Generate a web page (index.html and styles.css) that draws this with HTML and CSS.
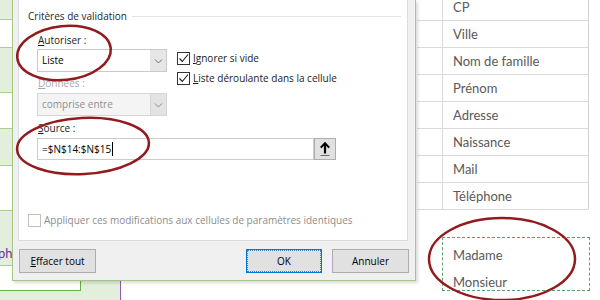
FILE: index.html
```html
<!DOCTYPE html>
<html lang="fr">
<head>
  <meta charset="UTF-8" />
  <title>Validation des données</title>
  <link rel="stylesheet" href="styles.css">
</head>
<body>
  <div class="screen">
    <div class="sheet-left">
      <div class="band green h19"></div>
      <div class="band h28"></div>
      <div class="band green h45"></div>
      <div class="band h36"></div>
      <div class="band green h37"></div>
      <div class="band h45"></div>
      <div class="band green h55"><span class="cut">phe</span></div>
      <div class="band rest"></div>
    </div>

    <div class="dialog">
      <div class="panel">
        <div class="group-title"><span>Critères de validation</span></div>

        <div class="criteria">
          <div class="col-left">
            <label class="lbl"><u>A</u>utoriser :</label>
            <div class="combo">
              <span class="combo-text">Liste</span>
              <span class="combo-btn">
                <svg width="9" height="6" viewBox="0 0 9 6"><path d="M1 1.5l3.5 3.5L8 1.5" fill="none" stroke="#6b6b6b"/></svg>
              </span>
            </div>
            <label class="lbl off"><u>D</u>onnées :</label>
            <div class="combo off">
              <span class="combo-text">comprise entre</span>
              <span class="combo-btn">
                <svg width="9" height="6" viewBox="0 0 9 6"><path d="M1 1.5l3.5 3.5L8 1.5" fill="none" stroke="#8a8a8a"/></svg>
              </span>
            </div>
          </div>
          <div class="col-right">
            <div class="check">
              <span class="box"><svg width="11" height="11" viewBox="0 0 11 11"><path d="M1.5 5.5l2.8 3L10 1.5" fill="none" stroke="#1a1a1a" stroke-width="1.1"/></svg></span>
              <span><u>I</u>gnorer si vide</span>
            </div>
            <div class="check">
              <span class="box"><svg width="11" height="11" viewBox="0 0 11 11"><path d="M1.5 5.5l2.8 3L10 1.5" fill="none" stroke="#1a1a1a" stroke-width="1.1"/></svg></span>
              <span><u>L</u>iste déroulante dans la cellule</span>
            </div>
          </div>
        </div>

        <label class="lbl source-lbl"><u>S</u>ource :</label>
        <div class="source-row">
          <div class="source-input">=$N$14:$N$15<span class="caret"></span></div>
          <span class="ref-btn">
            <svg width="12" height="16" viewBox="0 0 12 16">
              <path d="M6 2.5V12.5" stroke="#000" stroke-width="2.2"/>
              <path d="M1.8 6.6L6 2.2l4.2 4.4" fill="none" stroke="#000" stroke-width="2"/>
              <path d="M1.5 14.5h9" stroke="#6a6a6a"/>
            </svg>
          </span>
        </div>

        <div class="check apply off">
          <span class="box"></span>
          <span>Appliquer ces modifications aux cellules de paramètres identiques</span>
        </div>
      </div>

      <div class="buttons">
        <span class="btn"><u>E</u>ffacer tout</span>
        <span class="spacer"></span>
        <span class="btn ok">OK</span>
        <span class="btn">Annuler</span>
      </div>
    </div>

    <div class="sheet-right">
      <div class="row first"><span class="c1"></span><span class="c2">CP</span></div>
      <div class="row"><span class="c1"></span><span class="c2">Ville</span></div>
      <div class="row"><span class="c1"></span><span class="c2">Nom de famille</span></div>
      <div class="row"><span class="c1"></span><span class="c2">Prénom</span></div>
      <div class="row"><span class="c1"></span><span class="c2">Adresse</span></div>
      <div class="row"><span class="c1"></span><span class="c2">Naissance</span></div>
      <div class="row"><span class="c1"></span><span class="c2">Mail</span></div>
      <div class="row"><span class="c1"></span><span class="c2">Téléphone</span></div>

      <div class="copy-box">
        <div class="line">Madame</div>
        <div class="line">Monsieur</div>
      </div>
    </div>

    <div class="sheet-bottom">
      <span class="cell-a"></span>
      <span class="cell-b"></span>
      <span class="cell-rest"></span>
    </div>

    <svg class="marks" width="600" height="300" viewBox="0 0 600 300">
      <ellipse cx="64" cy="53" rx="47" ry="27" transform="rotate(-6 64 53)"/>
      <ellipse cx="83" cy="146" rx="66" ry="28" transform="rotate(-3 83 146)"/>
      <ellipse cx="502" cy="259" rx="73" ry="41"/>
    </svg>
  </div>
</body>
</html>
```

FILE: styles.css
```css
* {
  box-sizing: border-box;
}

body {
  margin: 0;
  width: 600px;
  height: 300px;
  overflow: hidden;
  background: #ffffff;
  font-family: 'Open Sans', 'Noto Sans', sans-serif;
  font-size: 10px;
  color: #1a1a1a;
}

u {
  text-decoration: underline;
  text-underline-offset: 1px;
}

.screen {
  position: relative;
  display: grid;
  grid-template-columns: 12px 404px 184px;
  grid-template-rows: 281px 19px;
  width: 600px;
  height: 300px;
}

/* spreadsheet behind the dialog */

.sheet-left {
  grid-column: 1;
  grid-row: 1;
  display: flex;
  flex-direction: column;
  overflow: hidden;
  background: #ffffff;
}

.band {
  border-bottom: 1px solid #a9d08e;
  flex-shrink: 0;
}

.band.green {
  background: #e2efda;
}

.h19 { height: 20px; }
.h28 { height: 28px; }
.h36 { height: 36px; }
.h37 { height: 37px; }
.h45 { height: 45px; }
.h55 { height: 55px; }

.band.rest {
  flex: 1;
  border-bottom: none;
}

.cut {
  display: block;
  padding-top: 33px;
  margin-left: -2px;
  font-family: 'Lato', sans-serif;
  font-size: 13px;
  line-height: 18px;
  color: #7030a0;
  white-space: nowrap;
}

.sheet-bottom {
  grid-column: 1 / 3;
  grid-row: 2;
  display: flex;
  background: #e2efda;
}

.cell-a {
  width: 81px;
  height: 10px;
  background: #ffffff;
  border-right: 1px solid #70ad47;
  border-bottom: 1px solid #70ad47;
}

.cell-b {
  width: 40px;
  border-right: 1px solid #8e5bb5;
}

.cell-rest {
  flex: 1;
  background: #ffffff;
}

.sheet-right {
  grid-column: 3;
  grid-row: 1 / 3;
  padding-left: 1px;
  background: #ffffff;
  font-family: 'Lato', sans-serif;
  font-size: 13px;
  color: #595959;
}

.row {
  display: flex;
  width: 172px;
  height: 27px;
  border-bottom: 1px solid #dadada;
}

.row.first {
  height: 21px;
}

.c1 {
  width: 26px;
  border-right: 1px solid #dadada;
}

.c2 {
  width: 146px;
  padding: 0 0 4px 10px;
  border-right: 1px solid #d0d0d0;
  display: flex;
  align-items: flex-end;
  line-height: 18px;
}

.copy-box {
  width: 148px;
  height: 54px;
  margin: 27px 0 0 25px;
  padding: 4px 0 0 10px;
  border: 1px dashed #5a9f6c;
  line-height: 27px;
}

/* the dialog */

.dialog {
  grid-column: 2;
  grid-row: 1;
  position: relative;
  z-index: 1;
  display: flex;
  flex-direction: column;
  background: #f0f0f0;
  border: 1px solid #a3c788;
  border-top: none;
  box-shadow: 2px 2px 3px rgba(0, 0, 0, 0.14);
}

.panel {
  display: flex;
  flex-direction: column;
  height: 241px;
  margin: 0 7px 0 5px;
  background: #ffffff;
  border: 1px solid #dcdcdc;
  border-top: none;
}

.group-title {
  display: flex;
  align-items: center;
  height: 20px;
  margin-top: 6px;
  padding: 0 6px 0 9px;
  color: #262626;
}

.group-title::after {
  content: '';
  flex: 1;
  margin-left: 5px;
  border-top: 1px solid #e3e3e3;
}

.criteria {
  display: flex;
  gap: 10px;
  padding-left: 18px;
}

.col-left {
  width: 130px;
}

.lbl {
  display: block;
  height: 16px;
  line-height: 16px;
  margin: 6px 0 1px 1px;
}

.lbl.off {
  margin-top: 3px;
  margin-bottom: 2px;
  color: #a8a8a8;
}

.combo {
  display: flex;
  height: 23px;
  border: 1px solid #c9c9c9;
  background: #ffffff;
}

.combo-text {
  flex: 1;
  padding-left: 4px;
  line-height: 21px;
  color: #000000;
}

.combo-btn {
  width: 16px;
  display: flex;
  align-items: center;
  justify-content: center;
  background: #e6e6e6;
}

.combo.off {
  background: #f4f4f4;
  border-color: #d6d6d6;
}

.combo.off .combo-text {
  color: #8f8f8f;
}

.combo.off .combo-btn {
  background: #e3e3e3;
  border-left: 1px solid #d6d6d6;
}

.col-right {
  padding-top: 26px;
}

.check {
  display: flex;
  align-items: center;
  gap: 3px;
  height: 13px;
  margin-bottom: 7px;
  line-height: 13px;
  white-space: nowrap;
}

.box {
  width: 13px;
  height: 13px;
  flex-shrink: 0;
  border: 1px solid #333333;
  background: #ffffff;
}

.box svg {
  display: block;
}

.source-lbl {
  margin: 4px 0 2px 19px;
}

.source-row {
  display: flex;
  margin-left: 18px;
  height: 22px;
}

.source-input {
  width: 277px;
  border: 1px solid #cccccc;
  padding-left: 4px;
  line-height: 20px;
  color: #000000;
}

.caret {
  display: inline-block;
  width: 1px;
  height: 14px;
  margin-left: 1px;
  vertical-align: -3px;
  background: #000000;
}

.ref-btn {
  width: 22px;
  display: flex;
  align-items: center;
  justify-content: center;
  background: #e1e1e1;
  border: 1px solid #adadad;
}

.check.apply {
  margin: 54px 0 0 9px;
  color: #8d8d8d;
}

.check.off .box {
  border-color: #bfbfbf;
}

.buttons {
  display: flex;
  gap: 10px;
  padding: 8px 6px 0;
}

.spacer {
  flex: 1;
}

.btn {
  width: 77px;
  height: 24px;
  display: flex;
  align-items: center;
  justify-content: center;
  background: #e1e1e1;
  border: 1px solid #adadad;
  color: #000000;
}

.btn.ok {
  width: 76px;
  border-color: #0078d7;
  outline: 1px dotted #4a7fb5;
  outline-offset: -2px;
}

/* red annotations drawn over everything */

.marks {
  position: absolute;
  left: 0;
  top: 0;
  z-index: 2;
  pointer-events: none;
}

.marks ellipse {
  fill: none;
  stroke: #921b1e;
  stroke-width: 2.5;
}
```
